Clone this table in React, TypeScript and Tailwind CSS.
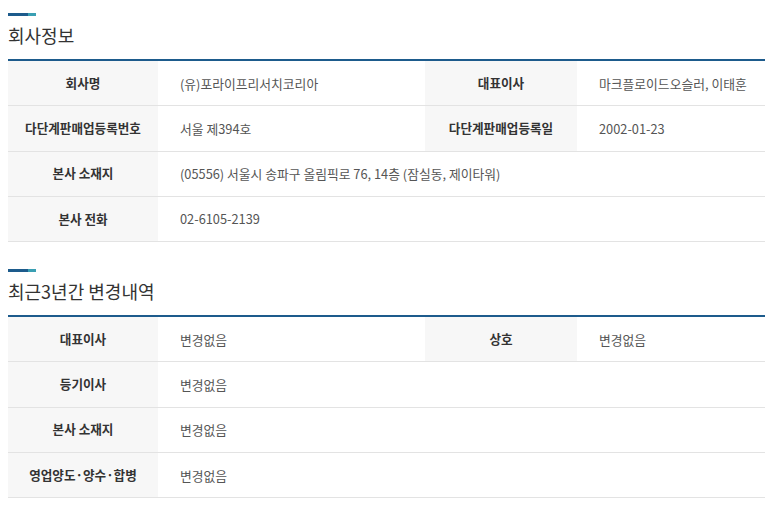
import React from "react";

type Cell = { label: string; value: string };
type Row = Cell[];

const font = { fontFamily: '"Noto Sans CJK KR", "Noto Sans", sans-serif' };

function Section({ title, rows, className }: { title: string; rows: Row[]; className?: string }) {
  return (
    <section className={className}>
      <div className="flex h-[3px] w-[28px]">
        <div className="h-full w-[20px] bg-[#1d5b8c]" />
        <div className="h-full w-[8px] bg-[#3a9fb3]" />
      </div>
      <h2 className="mt-[7px] h-[24px] text-[18px] leading-[24px] font-normal text-[#333]">{title}</h2>
      <div className="mt-[12px] border-t-2 border-[#1d5b8c]">
        {rows.map((row, i) => (
          <div key={i} className="grid h-[45.3px] grid-cols-[150px_267px_152px_1fr] border-b border-[#e3e3e3]">
            {row.map((c, j) => (
              <React.Fragment key={j}>
                <div className="flex items-center justify-center bg-[#f7f7f7] text-[12.6px] font-bold text-[#333]">
                  {c.label}
                </div>
                <div
                  className={
                    "flex items-center pl-[22px] text-[12.8px] text-[#555] " +
                    (row.length === 1 ? "col-span-3" : "")
                  }
                >
                  {c.value}
                </div>
              </React.Fragment>
            ))}
          </div>
        ))}
      </div>
    </section>
  );
}

export default function App() {
  const company: Row[] = [
    [
      { label: "회사명", value: "(유)포라이프리서치코리아" },
      { label: "대표이사", value: "마크플로이드오슬러, 이태훈" },
    ],
    [
      { label: "다단계판매업등록번호", value: "서울 제394호" },
      { label: "다단계판매업등록일", value: "2002-01-23" },
    ],
    [{ label: "본사 소재지", value: "(05556) 서울시 송파구 올림픽로 76, 14층 (잠실동, 제이타워)" }],
    [{ label: "본사 전화", value: "02-6105-2139" }],
  ];
  const changes: Row[] = [
    [
      { label: "대표이사", value: "변경없음" },
      { label: "상호", value: "변경없음" },
    ],
    [{ label: "등기이사", value: "변경없음" }],
    [{ label: "본사 소재지", value: "변경없음" }],
    [{ label: "영업양도·양수·합병", value: "변경없음" }],
  ];
  return (
    <div className="min-h-[524px] w-[773px] bg-white px-[8px] pt-[13px]" style={font}>
      <Section title="회사정보" rows={company} />
      <Section title="최근3년간 변경내역" rows={changes} className="mt-[27px]" />
    </div>
  );
}
